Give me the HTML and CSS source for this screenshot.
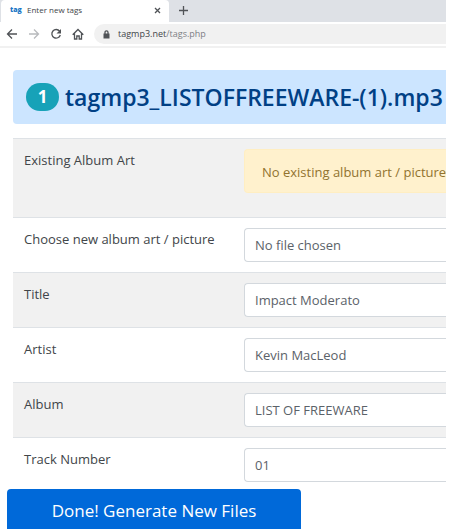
FILE: index.html
```html
<!DOCTYPE html>
<html lang="en">
<head>
    <meta charset="UTF-8">
    <meta name="viewport" content="width=device-width, initial-scale=1.0">
    <title>Enter new tags</title>
    <link rel="stylesheet" href="styles.css">
</head>
<body>
    <div class="window">
        <header class="browser">
            <div class="tabs">
                <div class="tab">
                    <span class="favicon">tag</span>
                    <span class="tab-title">Enter new tags</span>
                    <button class="icon-button tab-close" type="button" aria-label="Close tab">
                        <svg width="7" height="7" viewBox="0 0 7 7"><path d="M1 1l5 5M6 1L1 6"/></svg>
                    </button>
                </div>
                <button class="icon-button new-tab" type="button" aria-label="New tab">
                    <svg width="9" height="9" viewBox="0 0 9 9"><path d="M4.5 0v9M0 4.5h9"/></svg>
                </button>
            </div>
            <div class="toolbar">
                <button class="icon-button" type="button" aria-label="Back">
                    <svg width="12" height="12" viewBox="0 0 12 12"><path d="M11 6H2M6 1.5L1.5 6 6 10.5"/></svg>
                </button>
                <button class="icon-button muted" type="button" aria-label="Forward">
                    <svg width="12" height="12" viewBox="0 0 12 12"><path d="M1 6h9M6 1.5L10.5 6 6 10.5"/></svg>
                </button>
                <button class="icon-button" type="button" aria-label="Reload">
                    <svg width="12" height="12" viewBox="0 0 12 12"><path d="M9.6 3.2A4.3 4.3 0 1 0 10.3 7"/><path class="solid" d="M11 1v4.500H6.500z"/></svg>
                </button>
                <button class="icon-button" type="button" aria-label="Home">
                    <svg width="12" height="12" viewBox="0 0 12 12"><path d="M.7 6.800L6 1.500l5.300 5.300M2.500 5.500V11h2.300V8h2.400v3h2.300V5.500"/></svg>
                </button>
                <div class="address">
                    <svg width="7" height="9" viewBox="0 0 7 9"><path class="solid" d="M.5 3.500h6V8.500h-6z"/><path d="M2 4V2.300a1.500 1.500 0 0 1 3 0V4"/></svg>
                    <span>tagmp3.net<span class="path">/tags.php</span></span>
                </div>
            </div>
        </header>
        <main>
            <h1 class="file-heading"><span class="badge">1</span>tagmp3_LISTOFFREEWARE-(1).mp3</h1>
            <form id="tags">
                <table class="tag-table">
                    <tr>
                        <td class="name">Existing Album Art</td>
                        <td><div class="alert">No existing album art / picture</div></td>
                    </tr>
                    <tr>
                        <td class="name"><label for="art">Choose new album art / picture</label></td>
                        <td><input class="field" type="file" id="art"></td>
                    </tr>
                    <tr>
                        <td class="name"><label for="title">Title</label></td>
                        <td><input class="field" type="text" id="title" value="Impact Moderato"></td>
                    </tr>
                    <tr>
                        <td class="name"><label for="artist">Artist</label></td>
                        <td><input class="field" type="text" id="artist" value="Kevin MacLeod"></td>
                    </tr>
                    <tr>
                        <td class="name"><label for="album">Album</label></td>
                        <td><input class="field" type="text" id="album" value="LIST OF FREEWARE"></td>
                    </tr>
                    <tr>
                        <td class="name"><label for="track">Track Number</label></td>
                        <td><input class="field" type="text" id="track" value="01"></td>
                    </tr>
                </table>
            </form>
        </main>
    </div>
    <button class="submit" type="submit" form="tags">Done! Generate New Files</button>
</body>
</html>
```

FILE: styles.css
```css
* {
    box-sizing: border-box;
}
body {
    margin: 0;
    background-color: #fff;
    color: #414549;
    font-family: "Open Sans", "Noto Sans", sans-serif;
    font-size: 13px;
    line-height: 22px;
}
.window {
    margin-right: 4px;
    overflow: hidden;
}
.browser {
    border-bottom: 2px solid #f1f1f1;
    font-size: 9px;
}
.tabs {
    display: flex;
    height: 22px;
    background-color: #dee1e6;
}
.tab {
    display: flex;
    align-items: center;
    width: 168px;
    margin-left: 1px;
    padding: 0 8px 2px 9px;
    background-color: #fff;
    border-radius: 4px 4px 0 0;
}
.favicon {
    width: 17px;
    color: #1976c5;
    font-size: 7px;
    font-weight: 800;
}
.tab-title {
    flex: 1;
    font-size: 8px;
}
.icon-button {
    display: flex;
    align-items: center;
    justify-content: center;
    padding: 0;
    border: 0;
    background: none;
    color: #505357;
}
.muted {
    color: #b8babd;
}
svg path {
    fill: none;
    stroke: currentColor;
    stroke-width: 1.3;
}
svg .solid {
    fill: currentColor;
    stroke: none;
}
.new-tab {
    margin: 0 0 2px 10px;
}
.toolbar {
    display: flex;
    align-items: center;
    gap: 10px;
    height: 24px;
    padding-left: 6px;
}
.address {
    display: flex;
    flex: 1;
    align-items: center;
    gap: 8px;
    height: 20px;
    padding-left: 9px;
    background-color: #f1f1f1;
    border-radius: 10px 0 0 10px;
}
.address svg {
    color: #505357;
}
.path {
    color: #7d8084;
}
main {
    padding: 22px 0 0 13px;
}
.file-heading {
    display: flex;
    align-items: center;
    height: 54px;
    margin: 0 0 14px;
    padding-left: 13px;
    background-color: #cce5ff;
    border-radius: 4px 0 0 4px;
    color: #004085;
    font-size: 23px;
    font-weight: 600;
    white-space: nowrap;
}
.badge {
    flex: none;
    width: 33px;
    margin-right: 6px;
    background-color: #17a2b8;
    border-radius: 14px;
    color: #fff;
    font-size: 17px;
    font-weight: 700;
    line-height: 28px;
    text-align: center;
}
.tag-table {
    width: 100%;
    border-collapse: collapse;
    table-layout: fixed;
}
.tag-table td {
    padding: 10px 0 10px 11px;
    border-top: 1px solid #dee2e6;
    vertical-align: top;
}
.tag-table .name {
    width: 220px;
}
.tag-table tr:nth-child(odd) {
    background-color: #f1f1f1;
}
.alert {
    margin-bottom: 14px;
    padding: 11px 0 9px 17px;
    background-color: #fff1cd;
    border: 1px solid #ffeec2;
    border-right: 0;
    border-radius: 4px 0 0 4px;
    color: #91732f;
    white-space: nowrap;
}
.field {
    display: block;
    width: 100%;
    height: 34px;
    padding: 0 10px;
    background-color: #fff;
    border: 1px solid #d3d8dd;
    border-right: 0;
    border-radius: 4px 0 0 4px;
    color: #5b6269;
    font: inherit;
    line-height: 32px;
}
.field::file-selector-button {
    display: none;
}
.submit {
    position: fixed;
    bottom: 0;
    left: 7px;
    width: 294px;
    height: 40px;
    padding: 3px 0 0;
    background-color: #0069d9;
    border: 0;
    border-radius: 4px 4px 0 0;
    color: #fff;
    font-family: inherit;
    font-size: 17px;
}
```
